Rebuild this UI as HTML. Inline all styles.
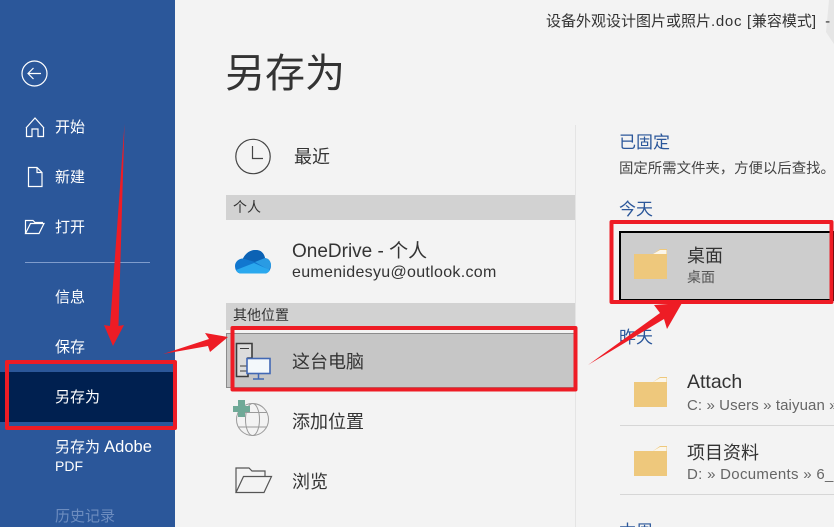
<!DOCTYPE html>
<html><head><meta charset="utf-8">
<style>
html,body{margin:0;padding:0;width:834px;height:527px;overflow:hidden}
body{background:#f3f3f3;font-family:"Liberation Sans","Noto Sans CJK SC",sans-serif;color:#333}
#w{position:absolute;left:0;top:0;width:834px;height:527px;overflow:hidden}
.a{position:absolute;white-space:nowrap;line-height:1}
.n{color:#fff;font-size:15px;left:55px}
.h{color:#2b579a;font-size:17px;left:619px}
.b{position:absolute}
.t{font-size:18px;color:#333}
.s{font-size:15px;color:#666}
</style></head><body><div id="w">
<svg class="b" style="left:0;top:0" width="834" height="60" viewBox="0 0 834 60" fill="none"><path d="M829 0H834V44L826 32Z" fill="#e6e6e6"/></svg>
<div class="b" style="left:0;top:0;width:175px;height:527px;background:#2b579a"></div>
<div class="b" style="left:0;top:372px;width:175px;height:50px;background:#002050"></div>
<div class="b" style="left:25px;top:262px;width:125px;height:1px;background:#7f9ccc"></div>
<div class="a n" style="top:120px">开始</div>
<div class="a n" style="top:170px">新建</div>
<div class="a n" style="top:220px">打开</div>
<div class="a n" style="top:290px">信息</div>
<div class="a n" style="top:340px">保存</div>
<div class="a n" style="top:390px">另存为</div>
<div class="a n" style="top:439px">另存为 <span style="font-size:16.5px">Adobe</span></div>
<div class="a n" style="top:459px;font-size:14px">PDF</div>
<div class="a n" style="top:509px;color:#6c8cbf">历史记录</div>
<div class="a" style="left:546px;top:14px;font-size:15px;color:#333">设备外观设计图片或照片<span style="letter-spacing:.7px">.doc [</span>兼容模式]<span style="margin-left:9px">-</span></div>
<div class="a" style="left:225px;top:54px;font-size:40px;color:#333">另存为</div>

<div class="b" style="left:575px;top:125px;width:1px;height:402px;background:#e4e4e4"></div>
<div class="b" style="left:226px;top:195px;width:349px;height:25px;background:#d2d2d2"></div>
<div class="b" style="left:226px;top:303px;width:349px;height:27px;background:#d2d2d2"></div>
<div class="b" style="left:226px;top:333px;height:55px;background:#c6c6c6;border:1px solid #8c8c8c;box-sizing:border-box;width:350px"></div>
<div class="a" style="left:233px;top:200px;font-size:14px">个人</div>
<div class="a" style="left:233px;top:308px;font-size:14px">其他位置</div>
<div class="a t" style="left:294px;top:148px">最近</div>
<div class="a" style="left:292px;top:242px;font-size:19px">OneDrive - 个人</div>
<div class="a" style="left:292px;top:265px;font-size:16px;letter-spacing:.3px">eumenidesyu@outlook.com</div>
<div class="a t" style="left:292px;top:353px">这台电脑</div>
<div class="a t" style="left:292px;top:413px">添加位置</div>
<div class="a t" style="left:292px;top:473px">浏览</div>

<div class="a h" style="top:134px">已固定</div>
<div class="a" style="left:619px;top:162px;font-size:14.4px;color:#444">固定所需文件夹，方便以后查找。</div>
<div class="a h" style="top:201px">今天</div>
<div class="b" style="left:619px;top:231px;width:215px;height:70px;background:#cdcdcd;border:2px solid #000;box-sizing:border-box"></div>
<div class="a t" style="left:687px;top:247px">桌面</div>
<div class="a" style="left:687px;top:270px;font-size:14px;color:#555">桌面</div>
<div class="a h" style="top:329px">昨天</div>
<div class="a" style="left:687px;top:373px;font-size:19.5px;color:#333">Attach</div>
<div class="a s" style="left:687px;top:398px;letter-spacing:.1px">C: » Users » taiyuan »</div>
<div class="b" style="left:620px;top:425px;width:214px;height:1px;background:#d6d6d6"></div>
<div class="a t" style="left:687px;top:444px">项目资料</div>
<div class="a s" style="left:687px;top:467px;letter-spacing:.3px">D: » Documents » 6_1</div>
<div class="b" style="left:620px;top:494px;width:214px;height:1px;background:#d6d6d6"></div>
<div class="a h" style="top:523px">本周</div>

<svg class="b" style="left:0;top:0" width="834" height="527" viewBox="0 0 834 527" fill="none">
<g stroke="#fff" stroke-width="1.2">
<circle cx="34.500" cy="73.500" r="12.500"/>
<path d="M41 73.500H28M33.500 68L28 73.500L33.500 79"/>
<path d="M26 128L35 118L44 128M26.500 127V136.500H32V129H38V136.500H43.500V127"/>
<path d="M28.500 167.500H37L42 172.500V186.500H28.500ZM37 167.500V172.500H42"/>
<path d="M25.500 233.500V220.500H33L35 222.500H43M25.500 233.500H39L44 223.500H30.500L25.500 233.500Z"/>
</g>
<g stroke="#444" stroke-width="1.2"><circle cx="253" cy="156.500" r="17.200"/><path d="M252.500 146V158.500H263"/></g>
<!-- onedrive -->
<path d="M241 273.500C236.500 273.500 235 269 235 266C235 262 238.500 258.500 243 258.500C246 252.500 251 250 256 250C260.500 250 264 253 265 258C269 258.500 271 262 271 265.500C271 270 268 273.500 265 273.500Z" fill="#1177cf"/>
<path d="M243 258.500C246 252.500 251 250 256 250C260.500 250 264 253 265 258L255 262Z" fill="#0c62b4"/>
<path d="M255 262L265 258C269 258.500 271 262 271 265.500L269 270Z" fill="#2a9be3"/>
<path d="M241 273.500C238.500 273.500 237 272 236 270L254 263L270 270C269 272 267 273.500 265 273.500Z" fill="#2aa8ee"/>
<!-- computer -->
<path d="M236.500 343.500H252V358H248V376.500H236.500Z" fill="#dcdcdc" stroke="#3c3c3c" stroke-width="1.600"/>
<path d="M240 348.500H249M240 366H247M240 371H247" stroke="#3c3c3c"/>
<rect x="247" y="358.500" width="23" height="15" fill="#f3f8fb" stroke="#4168b4" stroke-width="1.600"/>
<path d="M258.500 374V379M253 379H264" stroke="#4168b4" stroke-width="1.500"/>
<!-- globe -->
<g stroke="#9a9a9a" stroke-width="1"><circle cx="252.500" cy="419.500" r="16"/><ellipse cx="252.500" cy="419.500" rx="7" ry="16"/><path d="M238 412.500H267M238 427H267"/></g>
<path d="M238 400H245V406H250V412H245V417H238V412H233V406H238Z" fill="#6fa997"/>
<!-- browse folder -->
<path d="M236 492.500V468H249L252 471H265V477M236 492.500H264L271.500 476.500H243.500L236 492.500Z" stroke="#555" stroke-width="1.200" fill="#f3f3f3"/>
<!-- folders -->
<path d="M653 254L660 249H667V279H634V254Z" fill="#eec87c"/><path d="M653 254L660 250H666.500V254Z" fill="#fbf6ea"/>
<path d="M653 382L660 377H667V407H634V382Z" fill="#eec87c"/><path d="M653 382L660 378H666.500V382Z" fill="#fbf6ea"/>
<path d="M653 451L660 446H667V476H634V451Z" fill="#eec87c"/><path d="M653 451L660 447H666.500V451Z" fill="#fbf6ea"/>
<!-- red rectangles -->
<g stroke="#ee1c25" stroke-width="4" stroke-linejoin="round">
<rect x="7" y="362" width="168" height="66"/>
<rect x="232.500" y="328" width="343" height="61.500"/>
<rect x="611.500" y="222" width="220" height="80"/>
</g>
<!-- arrows -->
<g fill="#ee1c25">
<path d="M124.500 124L118.500 326L124 325L113 346L104 325L110 326Z"/>
<path d="M163 354L209 339L205 333L228 337L210 352L208 346Z"/>
<path d="M588 365L660 313L654 305L682 303L667 329L664 319Z"/>
</g>
</svg>
</div></body></html>
